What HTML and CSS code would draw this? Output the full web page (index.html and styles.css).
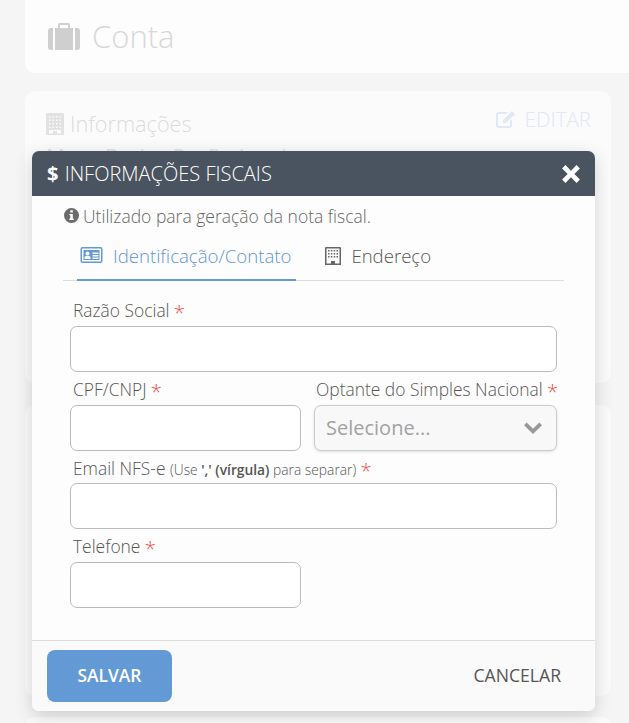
FILE: index.html
```html
<!DOCTYPE html>
<html lang="pt-BR">
<head>
    <meta charset="UTF-8">
    <meta name="viewport" content="width=device-width, initial-scale=1.0">
    <title>Conta</title>
    <link rel="stylesheet" href="styles.css">
</head>
<body>
    <div class="page">
        <div class="card title-card">
            <svg class="case-icon" viewBox="0 0 32 27"><path d="M10 5V2Q10 0 12 0h8Q22 0 22 2V5h-2V2h-8V5zM7 5h18v22H7zM0 8q0-3 3-3h2v22H3q-3 0-3-3zM27 5h2q3 0 3 3v16q0 3-3 3h-2z"/></svg>
            <span class="page-title">Conta</span>
        </div>
        <div class="card info-card">
            <div class="info-head">
                <div class="info-title">
                    <svg class="building-icon" viewBox="0 0 18 22"><path fill-rule="evenodd" d="M1 0h16a1 1 0 0 1 1 1v21H0V1a1 1 0 0 1 1-1zM3 3v1.500h1.500V3zm3.500 0v1.500H8V3zM10 3v1.500h1.500V3zm3.500 0v1.500H15V3zM3 6.500V8h1.500V6.500zm3.500 0V8H8V6.500zm3.500 0V8h1.500V6.500zm3.500 0V8H15V6.500zM3 10v1.500h1.500V10zm3.500 0v1.500H8V10zm3.500 0v1.500h1.500V10zm3.500 0v1.500H15V10zM3 13.500V15h1.500v-1.500zm3.500 0V15H8v-1.500zm3.500 0V15h1.500v-1.500zm3.500 0V15H15v-1.500zM3 17v3.500h4V18h4v2.500h4V17z"/></svg>
                    Informações
                </div>
                <div class="edit-link">
                    <svg class="edit-icon" viewBox="0 0 20 18"><path d="M3 2h9l-2 2H3a1 1 0 0 0-1 1v10a1 1 0 0 0 1 1h10a1 1 0 0 0 1-1v-4l2-2v6a3 3 0 0 1-3 3H3a3 3 0 0 1-3-3V5a3 3 0 0 1 3-3zM16 1l3 3-9 9H7v-3z"/></svg>
                    EDITAR
                </div>
            </div>
            <div class="info-name">Meus Dados Profissionais</div>
        </div>
        <div class="card middle-card"></div>
        <div class="card bottom-card"></div>
    </div>

    <div class="modal">
        <div class="modal-head">
            <div class="modal-title"><span class="dollar">$</span> INFORMAÇÕES FISCAIS</div>
            <svg class="close-icon" viewBox="0 0 18 18"><path d="M1 4 4 1 9 6 14 1 17 4 12 9 17 14 14 17 9 12 4 17 1 14 6 9z"/></svg>
        </div>
        <div class="modal-body">
            <div class="hint">
                <svg class="info-icon" viewBox="0 0 16 16"><path fill-rule="evenodd" d="M8 0a8 8 0 1 1 0 16A8 8 0 0 1 8 0zM6.700 2.500v2.300h2.700V2.500zM5.700 6.300v1.500h1v3.400h-1v1.500h4.700v-1.500h-1V6.300z"/></svg>
                Utilizado para geração da nota fiscal.
            </div>
            <div class="tabs">
                <div class="tab tab-active">
                    <svg class="id-icon" viewBox="0 0 22 16"><path fill-rule="evenodd" d="M2 0h18a2 2 0 0 1 2 2v12a2 2 0 0 1-2 2H2a2 2 0 0 1-2-2V2a2 2 0 0 1 2-2zM2 1.500a.5.5 0 0 0-.5.500v12a.5.5 0 0 0 .5.500h18a.5.5 0 0 0 .5-.500V2a.5.5 0 0 0-.5-.500zM3 3h16v10H3zM7 4.500a2 2 0 1 0 0 4 2 2 0 0 0 0-4zM4 12h6V10.500Q10 9 8.500 9h-3Q4 9 4 10.500zM12 5.500V7h6V5.500zM12 8v1.500h6V8zM12 10.500V12h6v-1.500z"/></svg>
                    Identificação/Contato
                </div>
                <div class="tab">
                    <svg class="tab-building" viewBox="0 0 16 18"><path fill-rule="evenodd" d="M1 0h14a1 1 0 0 1 1 1v17H0V1a1 1 0 0 1 1-1zM1.500 1.500v15H6V14h4v2.500h4.500v-15zM3 3h1.500v1.500H3zm2.800 0h1.500v1.500H5.800zm2.900 0h1.500v1.500H8.700zm2.800 0H13v1.500h-1.500zM3 6h1.500v1.500H3zm2.800 0h1.500v1.500H5.800zm2.900 0h1.500v1.500H8.700zm2.800 0H13v1.500h-1.500zM3 9h1.500v1.500H3zm2.800 0h1.500v1.500H5.800zm2.900 0h1.500v1.500H8.700zm2.800 0H13v1.500h-1.500z"/></svg>
                    Endereço
                </div>
            </div>
            <div class="form">
                <div class="field field-wide">
                    <label class="field-label">Razão Social<span class="req">*</span></label>
                    <input class="field-input" type="text">
                </div>
                <div class="field">
                    <label class="field-label">CPF/CNPJ<span class="req">*</span></label>
                    <input class="field-input" type="text">
                </div>
                <div class="field">
                    <label class="field-label label-shift">Optante do Simples Nacional<span class="req">*</span></label>
                    <div class="select-box">
                        <span class="select-text">Selecione...</span>
                        <svg class="chevron" viewBox="0 0 18 12"><path d="M0 3.200 2.700.5 9 6.800 15.300.5 18 3.200 9 12z"/></svg>
                    </div>
                </div>
                <div class="field field-wide">
                    <label class="field-label label-tight">Email NFS-e <small class="label-note">(Use <b>',' (vírgula)</b> para separar)</small><span class="req">*</span></label>
                    <input class="field-input" type="text">
                </div>
                <div class="field">
                    <label class="field-label">Telefone<span class="req">*</span></label>
                    <input class="field-input" type="text">
                </div>
            </div>
        </div>
        <div class="modal-foot">
            <button class="btn-save">SALVAR</button>
            <button class="btn-cancel">CANCELAR</button>
        </div>
    </div>
</body>
</html>
```

FILE: styles.css
```css
html, body {
    height: 100%;
}
body {
    margin: 0;
    background: #f5f5f5;
    font-family: "Open Sans", sans-serif;
    color: #555;
    overflow: hidden;
}
.page {
    padding: 0 18px 0 25px;
    height: 723px;
    box-sizing: border-box;
    overflow: hidden;
}
.card {
    background: #fbfbfb;
    border-radius: 10px;
}
.title-card {
    display: flex;
    align-items: center;
    gap: 12px;
    height: 73px;
    margin: 0 -18px 18px 0;
    padding: 0 0 0 23px;
    border-radius: 0 0 0 10px;
    box-sizing: border-box;
    background: #fdfdfd;
}
.case-icon {
    width: 32px;
    height: 27px;
    fill: #cfcfcf;
}
.page-title {
    margin-top: -2px;
    font-size: 31px;
    font-weight: 300;
    color: #d8d8d8;
}
.info-card {
    height: 292px;
    margin-bottom: 22px;
    padding: 0 20px 0 21px;
    box-sizing: border-box;
}
.info-head {
    display: flex;
    justify-content: space-between;
    padding-top: 15px;
}
.info-title {
    display: flex;
    align-items: center;
    gap: 6px;
    height: 34px;
    font-size: 21.700px;
    font-weight: 300;
    color: #dcdcdc;
}
.building-icon {
    width: 18px;
    height: 22px;
    margin-top: 2px;
    fill: #e2e2e2;
}
.edit-link {
    display: flex;
    align-items: center;
    gap: 9px;
    height: 26px;
    font-size: 20.500px;
    font-weight: 300;
    color: #e0e8f3;
}
.edit-icon {
    width: 20px;
    height: 18px;
    fill: #e0e8f3;
}
.info-name {
    margin-top: 3px;
    font-size: 21px;
    color: #e2e2e2;
    white-space: nowrap;
}
.middle-card {
    height: 291px;
    margin-bottom: 21px;
}
.bottom-card {
    height: 100px;
}

.modal {
    position: absolute;
    left: 32px;
    top: 151px;
    width: 563px;
    height: 560px;
    display: flex;
    flex-direction: column;
    background: #fdfdfd;
    border-radius: 7px;
    box-shadow: 0 5px 18px rgba(0, 0, 0, 0.17);
    overflow: hidden;
}
.modal-head {
    display: flex;
    justify-content: space-between;
    align-items: center;
    flex: none;
    height: 45px;
    padding: 0 14px 0 15px;
    background: #4a5360;
    color: #fff;
}
.modal-title {
    margin-top: -1px;
    font-size: 20px;
    font-weight: 300;
}
.dollar {
    margin-right: 1px;
    font-weight: 700;
}
.close-icon {
    width: 20px;
    height: 20px;
    fill: #fff;
}
.modal-body {
    flex: 1;
    padding: 0 31px;
}
.hint {
    display: flex;
    align-items: center;
    gap: 4px;
    height: 39px;
    padding-bottom: 2px;
    font-size: 17.500px;
    font-weight: 300;
    color: #666;
}
.info-icon {
    width: 15px;
    height: 15px;
    margin-left: 1px;
    flex: none;
    fill: #6b6b6b;
}
.tabs {
    display: flex;
    height: 44px;
    border-bottom: 1px solid #ddd;
    box-sizing: border-box;
}
.tab {
    display: flex;
    align-items: center;
    gap: 10px;
    padding: 0 20px 6px 0;
    font-size: 18.600px;
    font-weight: 300;
    color: #555;
}
.tab-active {
    height: 44px;
    margin: 0 29px 0 14px;
    padding: 0 5px 6px 3px;
    border-bottom: 2px solid #6399d4;
    box-sizing: border-box;
    color: #5f97d3;
}
.id-icon {
    width: 23px;
    height: 16px;
    fill: #6399d4;
}
.tab-building {
    width: 16px;
    height: 18px;
    fill: #666;
}
.form {
    display: grid;
    grid-template-columns: 231px 243px;
    column-gap: 13px;
    margin-left: 7px;
    padding-top: 16px;
}
.field-wide {
    grid-column: 1 / 3;
}
.field-label {
    display: block;
    height: 29px;
    padding-left: 3px;
    font-size: 17.400px;
    font-weight: 300;
    line-height: 26px;
    white-space: nowrap;
    color: #555;
}
.label-shift {
    padding-left: 2px;
}
.label-tight {
    height: 28px;
}
.label-note {
    font-size: 13.800px;
}
.label-note b {
    font-weight: 600;
}
.req {
    margin-left: 4px;
    color: #f0524f;
    font-size: 21px;
    line-height: 20px;
    vertical-align: -3px;
}
.field-input {
    display: block;
    width: 100%;
    height: 46px;
    margin-bottom: 4px;
    padding: 0 10px;
    border: 1px solid #bbb;
    border-radius: 7px;
    background: #fff;
    box-sizing: border-box;
}
.select-box {
    display: flex;
    justify-content: space-between;
    align-items: center;
    height: 46px;
    padding: 0 14px 0 11px;
    border: 1px solid #ccc;
    border-radius: 7px;
    background: #f8f8f8;
    box-shadow: 0 1px 3px rgba(0, 0, 0, 0.12);
    box-sizing: border-box;
    font-size: 20px;
    color: #a2a2a2;
}
.select-text {
    margin-top: -2px;
}
.chevron {
    width: 18px;
    height: 12px;
    fill: #999;
}
.modal-foot {
    display: flex;
    justify-content: space-between;
    align-items: center;
    flex: none;
    height: 71px;
    padding: 0 15px;
    border-top: 1px solid #ddd;
    background: #fafafa;
    box-sizing: border-box;
}
.btn-save {
    width: 125px;
    height: 52px;
    margin-bottom: 1px;
    padding: 0 0 2px;
    border: none;
    border-radius: 8px;
    background: #6399d4;
    color: #fff;
    font-family: "Open Sans", sans-serif;
    font-size: 17.400px;
    font-weight: 600;
}
.btn-cancel {
    padding: 0 19px 2px 18px;
    border: none;
    background: none;
    color: #555;
    font-family: "Open Sans", sans-serif;
    font-size: 17.600px;
    font-weight: 400;
}
```
